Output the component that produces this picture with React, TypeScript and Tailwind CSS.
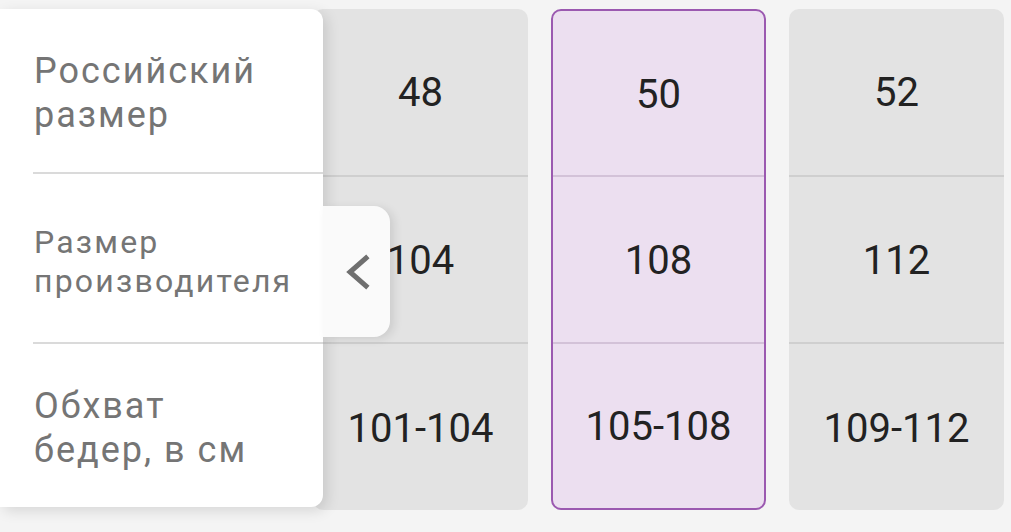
type Col = { ru: string; maker: string; hips: string; active?: boolean };

const cols: Col[] = [
  { ru: "48", maker: "104", hips: "101-104" },
  { ru: "50", maker: "108", hips: "105-108", active: true },
  { ru: "52", maker: "112", hips: "109-112" },
];

// the middle label is longer, so it is set smaller to fit the panel
const labels = [
  { lines: ["Российский", "размер"], small: false },
  { lines: ["Размер", "производителя"], small: true },
  { lines: ["Обхват", "бедер, в см"], small: false },
];

const SizeColumn = ({ col }: { col: Col }) => {
  const line = col.active ? "border-[#d3c2d8]" : "border-[#cfcfcf]";
  return (
    <div
      className={`w-[215px] h-[501px] shrink-0 rounded-[10px] flex flex-col overflow-hidden ${
        col.active
          ? "bg-[#ecdff0] border-2 border-[#9b59b0]"
          : "bg-[#e3e3e3]"
      }`}
    >
      {[col.ru, col.maker, col.hips].map((v, i) => (
        <div
          key={i}
          className={`flex-1 flex items-center justify-center pt-[3px] text-[40px] text-[#222] ${
            i < 2 ? `border-b-2 ${line}` : ""
          }`}
        >
          {v}
        </div>
      ))}
    </div>
  );
};

export default function App() {
  return (
    <div
      className="relative w-[1011px] h-[532px] bg-[#f4f4f4] overflow-hidden"
      style={{ fontFamily: "Roboto, 'Noto Sans', sans-serif" }}
    >
      {/* size columns */}
      <div className="flex gap-[23px] pl-[313px] pt-[9px]">
        {cols.map((c) => (
          <SizeColumn key={c.ru} col={c} />
        ))}
      </div>

      {/* sticky label panel */}
      <div className="absolute left-0 top-[9px] w-[323px] h-[498px] bg-white rounded-r-[12px] shadow-[4px_4px_14px_rgba(0,0,0,0.12)] flex flex-col">
        {labels.map((l, i) => (
          <div
            key={i}
            className={`flex-1 flex flex-col justify-center ml-[33px] pl-[1px] text-[#757575] ${
              l.small
                ? "pt-[9px] text-[32px] leading-[39px] tracking-[2.2px]"
                : "pt-[5px] text-[36px] leading-[44px] tracking-[2px]"
            } ${i < 2 ? "border-b-2 border-[#dadada]" : ""}`}
          >
            <span>{l.lines[0]}</span>
            <span>{l.lines[1]}</span>
          </div>
        ))}
      </div>

      {/* scroll back button */}
      <button className="absolute left-[323px] top-[206px] w-[67px] h-[131px] bg-[#fafafa] rounded-r-[16px] shadow-[4px_2px_10px_rgba(0,0,0,0.1)] flex items-center pl-[21px]">
        <svg width="26" height="36" viewBox="0 0 26 36" fill="none">
          <polyline
            points="22,4 6,18 22,32"
            stroke="#6f6f6f"
            strokeWidth="5"
            strokeLinecap="square"
            strokeLinejoin="miter"
          />
        </svg>
      </button>
    </div>
  );
}
